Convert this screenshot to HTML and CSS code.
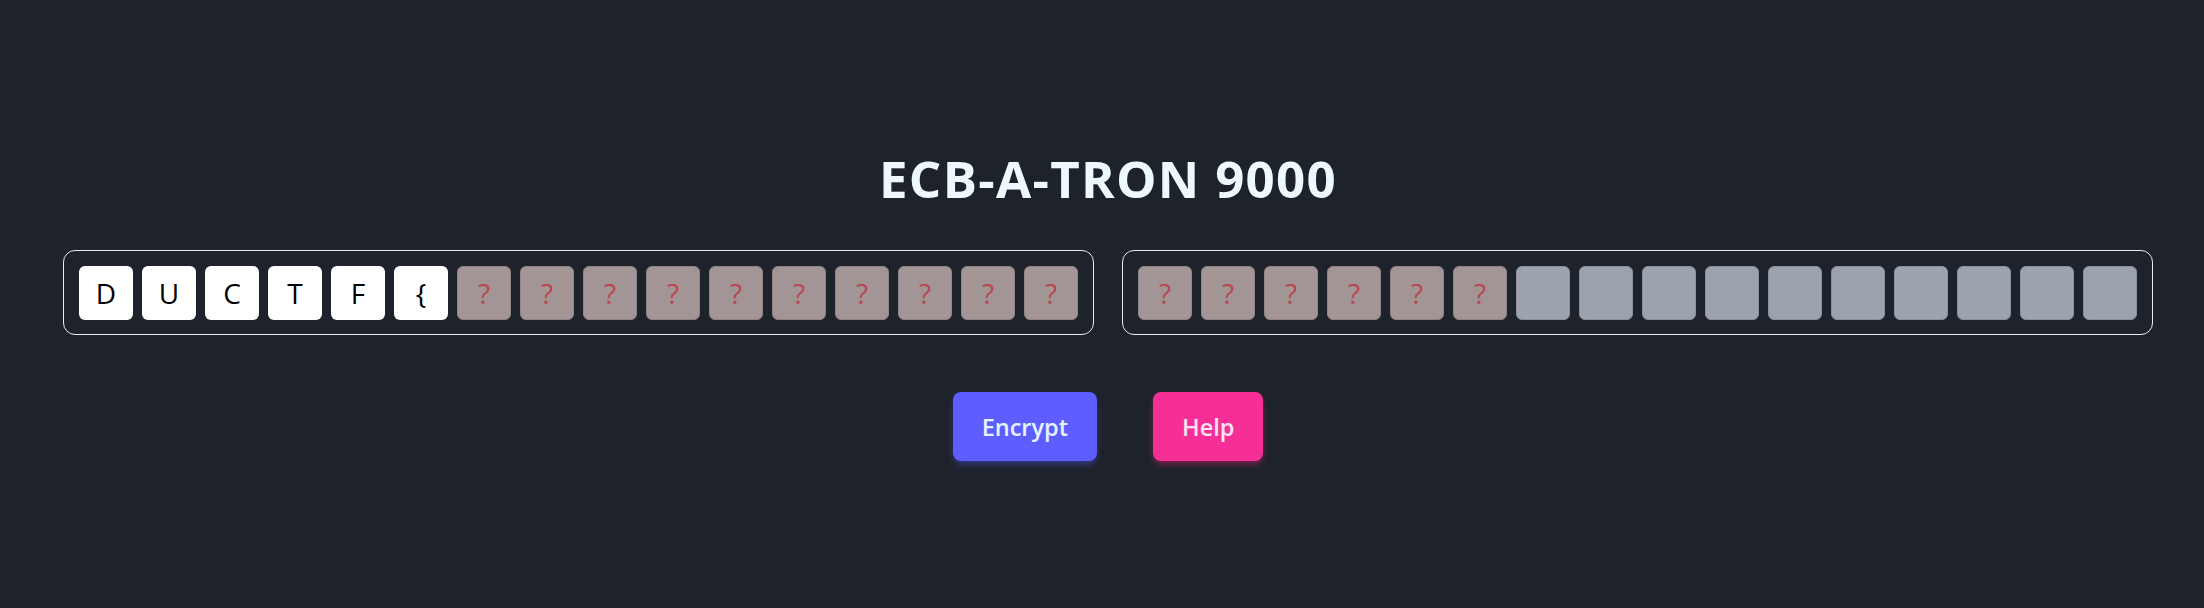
FILE: index.html
```html
<!DOCTYPE html>
<html lang="en">
<head>
<meta charset="utf-8">
<title>ECB-A-TRON 9000</title>
<link rel="stylesheet" href="styles.css">
</head>
<body>
<main class="app">
  <h1 class="title">ECB-A-TRON 9000</h1>
  <div class="blocks">
    <div class="block">
      <div class="tile known">D</div>
      <div class="tile known">U</div>
      <div class="tile known">C</div>
      <div class="tile known">T</div>
      <div class="tile known">F</div>
      <div class="tile known">{</div>
      <div class="tile unknown">?</div>
      <div class="tile unknown">?</div>
      <div class="tile unknown">?</div>
      <div class="tile unknown">?</div>
      <div class="tile unknown">?</div>
      <div class="tile unknown">?</div>
      <div class="tile unknown">?</div>
      <div class="tile unknown">?</div>
      <div class="tile unknown">?</div>
      <div class="tile unknown">?</div>
    </div>
    <div class="block">
      <div class="tile unknown">?</div>
      <div class="tile unknown">?</div>
      <div class="tile unknown">?</div>
      <div class="tile unknown">?</div>
      <div class="tile unknown">?</div>
      <div class="tile unknown">?</div>
      <div class="tile empty"></div>
      <div class="tile empty"></div>
      <div class="tile empty"></div>
      <div class="tile empty"></div>
      <div class="tile empty"></div>
      <div class="tile empty"></div>
      <div class="tile empty"></div>
      <div class="tile empty"></div>
      <div class="tile empty"></div>
      <div class="tile empty"></div>
    </div>
  </div>
  <div class="actions">
    <button class="btn btn-encrypt">Encrypt</button>
    <button class="btn btn-help">Help</button>
  </div>
</main>
</body>
</html>
```

FILE: styles.css
```css
html, body {
  margin: 0;
  padding: 0;
  background: #1e232b;
}

body {
  font-family: "Open Sans", "Noto Sans", sans-serif;
  height: 608px;
  overflow: hidden;
}

.app {
  display: flex;
  flex-direction: column;
  align-items: center;
  padding-top: 148px;
  padding-left: 12px;
}

.title {
  margin: 0;
  font-size: 51px;
  line-height: 60px;
  font-weight: 700;
  letter-spacing: 1.3px;
  color: #eef8ff;
}

.blocks {
  display: flex;
  gap: 28px;
  margin-top: 42px;
}

.block {
  display: flex;
  gap: 9px;
  padding: 14.5px 15px;
  border: 1px solid #e8eaee;
  border-radius: 12px;
}

.tile {
  width: 54px;
  height: 54px;
  box-sizing: border-box;
  border-radius: 6px;
  display: flex;
  align-items: center;
  justify-content: center;
  font-size: 28px;
  line-height: 1;
}

.known {
  background: #ffffff;
  color: #000000;
}

.unknown {
  background: #a39596;
  color: #b8474f;
  border: 1px solid #8f8485;
}

.empty {
  background: #9ca3af;
  border: 1px solid #8a909b;
}

.actions {
  display: flex;
  gap: 56px;
  margin-top: 57px;
}

.btn {
  font-family: "Open Sans", "Noto Sans", sans-serif;
  font-size: 23.5px;
  font-weight: 600;
  height: 69px;
  padding: 0 29px;
  border: none;
  border-radius: 8px;
  cursor: pointer;
}

.btn-encrypt {
  background: #5e5eff;
  color: #e6f2ff;
  box-shadow: 0 4px 6px -1px rgba(70, 70, 200, 0.6);
}

.btn-help {
  background: #f52f96;
  color: #fde4f1;
  box-shadow: 0 4px 6px -1px rgba(200, 30, 110, 0.6);
}
```
